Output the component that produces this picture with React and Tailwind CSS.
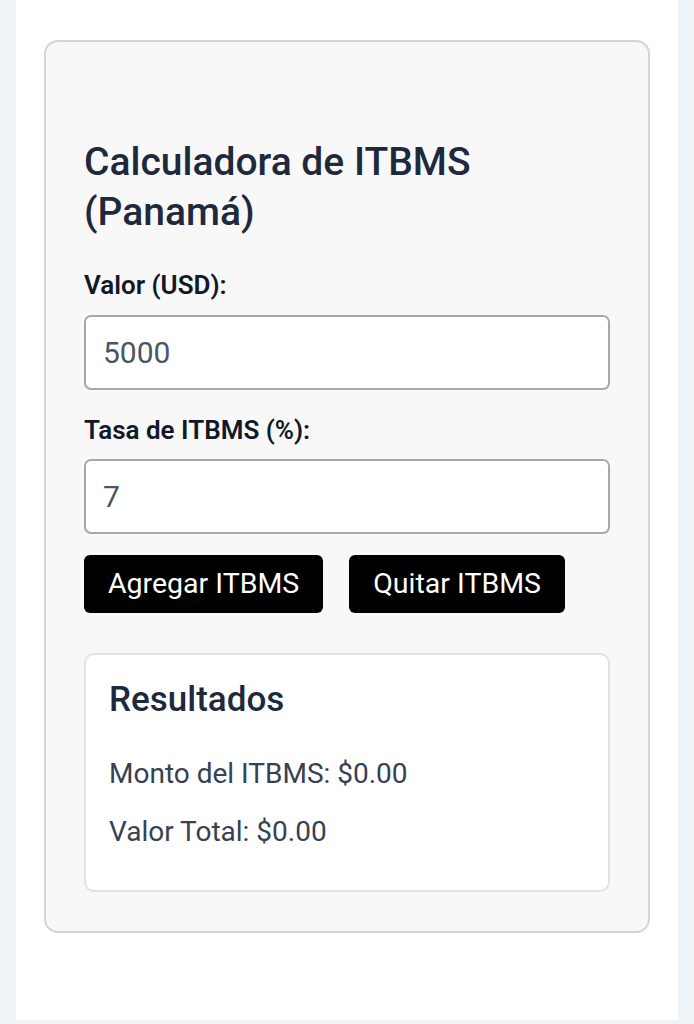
import { useState } from "react";

function App() {
  const [valor, setValor] = useState("5000");
  const [tasa, setTasa] = useState("7");

  return (
    <div className="min-h-screen bg-[#eef3f8] px-4 font-['Roboto',sans-serif]">
      <div className="bg-white min-h-[1020px] px-7 pt-10 pb-10">
        {/* Card */}
        <div className="border-2 border-[#d4d4d4] rounded-[14px] bg-[#f8f8f8] px-[38px] pt-[95px] pb-[39px]">
          <h1 className="text-[39px] leading-[50px] font-medium text-[#1e293b]">
            Calculadora de ITBMS (Panamá)
          </h1>

          <label className="block mt-[31px] text-[26px] leading-[34px] font-semibold text-[#111827]">
            Valor (USD):
          </label>
          <input
            value={valor}
            onChange={(e) => setValor(e.target.value)}
            className="mt-[13px] w-full h-[75px] bg-white border-2 border-[#a8a8a8] rounded-[7px] px-[17px] text-[30px] text-[#4b5563] outline-none"
          />

          <label className="block mt-[23px] text-[26px] leading-[34px] font-semibold text-[#111827]">
            Tasa de ITBMS (%):
          </label>
          <input
            value={tasa}
            onChange={(e) => setTasa(e.target.value)}
            className="mt-[12px] w-full h-[75px] bg-white border-2 border-[#a8a8a8] rounded-[7px] px-[17px] text-[30px] text-[#4b5563] outline-none"
          />

          <div className="flex gap-[26px] mt-[21px]">
            <button className="h-[58px] px-[24px] bg-black text-white text-[28.5px] rounded-[6px]">
              Agregar ITBMS
            </button>
            <button className="h-[58px] px-[24px] bg-black text-white text-[28.5px] rounded-[6px]">
              Quitar ITBMS
            </button>
          </div>

          {/* Resultados */}
          <div className="mt-10 bg-white border-2 border-[#e2e2e2] rounded-[10px] px-[23px] pt-[23px] pb-[40px]">
            <h2 className="text-[35px] leading-[44px] font-medium text-[#1e293b]">Resultados</h2>
            <p className="mt-[34px] text-[28px] leading-[36px] text-[#374151]">
              Monto del ITBMS: $0.00
            </p>
            <p className="mt-[22px] text-[28px] leading-[36px] text-[#374151]">
              Valor Total: $0.00
            </p>
          </div>
        </div>
      </div>
    </div>
  );
}

export default App;
